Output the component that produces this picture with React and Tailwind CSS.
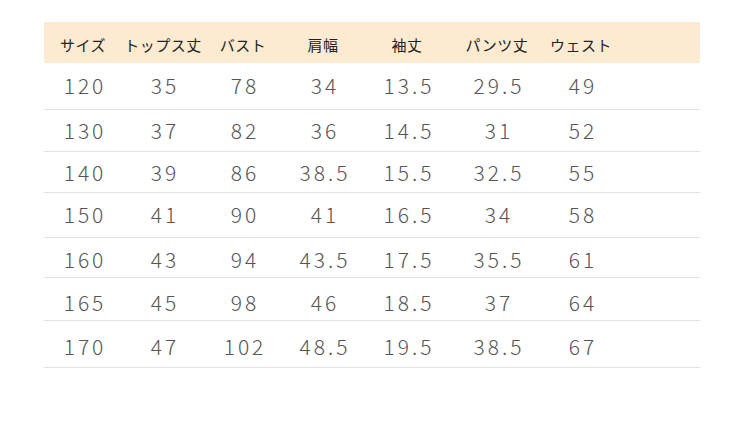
const cols = [
  { label: 'サイズ', w: 'w-[78px]' },
  { label: 'トップス丈', w: 'w-[82px]' },
  { label: 'バスト', w: 'w-[78px]' },
  { label: '肩幅', w: 'w-[82px]' },
  { label: '袖丈', w: 'w-[86px]' },
  { label: 'パンツ丈', w: 'w-[94px]' },
  { label: 'ウェスト', w: 'w-[74px]' },
];

const rows = [
  { h: 'h-[47px]', pt: 'pt-[0px]', v: ['120', '35', '78', '34', '13.5', '29.5', '49'] },
  { h: 'h-[42px]', pt: 'pt-[0px]', v: ['130', '37', '82', '36', '14.5', '31', '52'] },
  { h: 'h-[41px]', pt: 'pt-[2px]', v: ['140', '39', '86', '38.5', '15.5', '32.5', '55'] },
  { h: 'h-[45px]', pt: 'pt-[0px]', v: ['150', '41', '90', '41', '16.5', '34', '58'] },
  { h: 'h-[40px]', pt: 'pt-[5px]', v: ['160', '43', '94', '43.5', '17.5', '35.5', '61'] },
  { h: 'h-[43px]', pt: 'pt-[8px]', v: ['165', '45', '98', '46', '18.5', '37', '64'] },
  { h: 'h-[47px]', pt: 'pt-[6px]', v: ['170', '47', '102', '48.5', '19.5', '38.5', '67'] },
];

export default function App() {
  return (
    <div className="w-[750px] h-[435px] bg-white pt-[22px] pl-[44px]" style={{ fontFamily: '"Noto Sans CJK JP", "Noto Sans", sans-serif' }}>
      <div className="w-[656px]">
        <div className="flex h-[41px] items-center bg-[#fcebd0] pt-[5px] text-[15px] tracking-[0.5px] text-[#222]">
          {cols.map((c) => (
            <div key={c.label} className={`${c.w} text-center`}>{c.label}</div>
          ))}
        </div>
        {rows.map((r, i) => (
          <div key={i} className={`flex ${r.h} ${r.pt} items-center border-b border-[#e2e2e2] pl-[2px] text-[21px] font-light tracking-[3px] text-[#555]`}>
            {r.v.map((x, j) => (
              <div key={j} className={`${cols[j].w} text-center`}>{x}</div>
            ))}
          </div>
        ))}
      </div>
    </div>
  );
}
